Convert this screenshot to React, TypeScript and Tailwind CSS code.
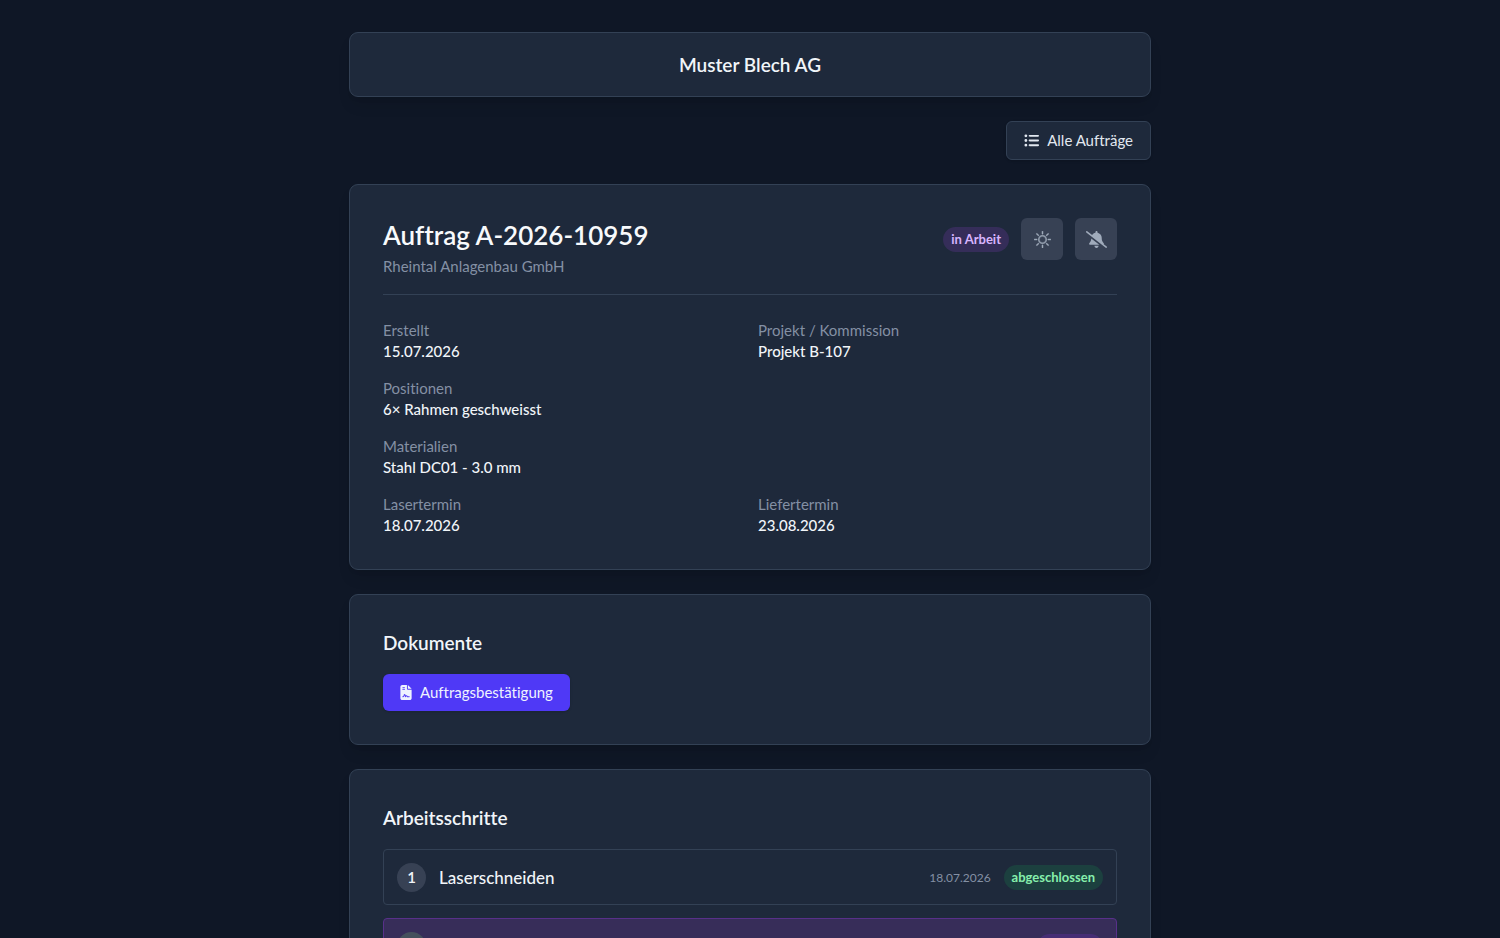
import type { ReactNode } from 'react';
import { FaBellSlash, FaFileContract, FaListUl } from 'react-icons/fa6';
import { BsSun } from 'react-icons/bs';

interface DetailProps {
  label: string;
  value: string;
  wide?: boolean;
}

interface Step {
  name: string;
  date: string;
  status: 'done' | 'active';
}

const details: DetailProps[] = [
  { label: 'Erstellt', value: '15.07.2026' },
  { label: 'Projekt / Kommission', value: 'Projekt B-107' },
  { label: 'Positionen', value: '6× Rahmen geschweisst', wide: true },
  { label: 'Materialien', value: 'Stahl DC01 - 3.0 mm', wide: true },
  { label: 'Lasertermin', value: '18.07.2026' },
  { label: 'Liefertermin', value: '23.08.2026' },
];

const steps: Step[] = [
  { name: 'Laserschneiden', date: '18.07.2026', status: 'done' },
  { name: '', date: '', status: 'active' },
];

function Card({ children }: { children: ReactNode }) {
  return (
    <section className="rounded-[9px] border border-[#334155] bg-[#1e293b] p-[33px] shadow-lg">{children}</section>
  );
}

function Detail({ label, value, wide }: DetailProps) {
  return (
    <div className={wide ? 'col-span-2' : ''}>
      <dt className="text-[#8490a4]">{label}</dt>
      <dd className="font-medium text-[#f1f5f9]">{value}</dd>
    </div>
  );
}

function Heading({ children }: { children: ReactNode }) {
  return <h2 className="mb-4 text-[19px] leading-[30px] font-semibold text-[#f1f5f9]">{children}</h2>;
}

function StepRow({ step, index }: { step: Step; index: number }) {
  const active = step.status === 'active';

  return (
    <li
      className={`flex h-14 items-center justify-between rounded border px-[13px] ${
        active ? 'border-[#58308a] bg-[#372d59]' : 'border-[#334155]'
      }`}
    >
      <div className="flex items-center gap-[13px]">
        <span
          className={`flex size-[29px] items-center justify-center rounded-full text-[15px] font-semibold text-[#f1f5f9] ${
            active ? 'bg-[#45505c]' : 'bg-[#374154]'
          }`}
        >
          {index + 1}
        </span>
        <span className="text-[17px] font-medium text-[#f1f5f9]">{step.name}</span>
      </div>
      <div className="flex items-center gap-[13px]">
        <span className="text-[12px] text-[#8490a4]">{step.date}</span>
        <span
          className={`rounded-full px-2 text-[13px] leading-[25px] font-bold ${
            active ? 'bg-[#472d74] text-[#d8b4fe]' : 'bg-[#1c403f] text-[#86efac]'
          }`}
        >
          {active ? 'in Arbeit' : 'abgeschlossen'}
        </span>
      </div>
    </li>
  );
}

export default function App() {
  return (
    <div className="h-screen overflow-x-hidden overflow-y-auto bg-[#0f1726] px-4 py-8 font-['Lato',sans-serif] text-[15px] leading-[21px] [font-variant-ligatures:none] [scrollbar-width:none]">
      <main className="mx-auto flex max-w-[802px] flex-col gap-6">
        <header className="rounded-[9px] border border-[#334155] bg-[#1e293b] py-4 text-center shadow-lg">
          <h1 className="text-[19px] leading-[31px] font-semibold text-[#f1f5f9]">Muster Blech AG</h1>
        </header>

        <div className="flex justify-end">
          <a
            href="#auftraege"
            className="flex items-center gap-2 rounded-md border border-[#334155] bg-[#1e293b] px-[17px] py-2 text-[#e2e8f0] shadow-sm"
          >
            <FaListUl className="size-[15px]" />
            Alle Aufträge
          </a>
        </div>

        <Card>
          <div className="flex items-start justify-between border-b border-[#334155] pb-[18px]">
            <div>
              <h2 className="text-[26px] leading-[34px] font-semibold text-[#f8fafc]">Auftrag A-2026-10959</h2>
              <p className="mt-1 leading-5 text-[#8490a4]">Rheintal Anlagenbau GmbH</p>
            </div>
            <div className="flex items-center gap-3">
              <span className="rounded-full bg-[#352d59] px-2 text-[13px] leading-[25px] font-bold text-[#d8b4fe]">
                in Arbeit
              </span>
              <button
                type="button"
                aria-label="Helles Design"
                className="flex size-[42px] items-center justify-center rounded-md bg-[#374154] text-[#a0abbb]"
              >
                <BsSun className="size-[17px]" strokeWidth={0.4} />
              </button>
              <button
                type="button"
                aria-label="Benachrichtigungen aus"
                className="flex size-[42px] items-center justify-center rounded-md bg-[#374154] text-[#a0abbb]"
              >
                <FaBellSlash className="size-[21px]" />
              </button>
            </div>
          </div>
          <dl className="grid grid-cols-2 gap-4 pt-[25px]">
            {details.map((item) => (
              <Detail key={item.label} {...item} />
            ))}
          </dl>
        </Card>

        <Card>
          <Heading>Dokumente</Heading>
          <button
            type="button"
            className="flex items-center gap-2 rounded-md bg-[#4f39f6] px-[17px] py-2 text-[#eef2ff] shadow-sm"
          >
            <FaFileContract className="h-[15px] w-3" />
            Auftragsbestätigung
          </button>
        </Card>

        <Card>
          <Heading>Arbeitsschritte</Heading>
          <ol className="flex flex-col gap-[13px]">
            {steps.map((step, index) => (
              <StepRow key={index} step={step} index={index} />
            ))}
          </ol>
        </Card>
      </main>
    </div>
  );
}
